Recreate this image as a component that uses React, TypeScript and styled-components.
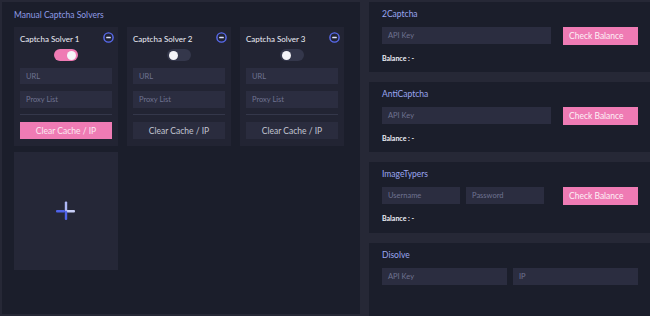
import { createGlobalStyle, styled } from 'styled-components';

const GlobalStyle = createGlobalStyle`
  html, body {
    margin: 0;
    padding: 0;
    background: #262836;
    font-family: Lato, "Open Sans", sans-serif;
    overflow: hidden;
  }
`;

type Solver = { name: string; on: boolean };

const solvers: Solver[] = [
  { name: 'Captcha Solver 1', on: true },
  { name: 'Captcha Solver 2', on: false },
  { name: 'Captcha Solver 3', on: false },
];

const MinusIcon = () => (
  <svg width="11" height="11" viewBox="0 0 11 11">
    <circle cx="5.5" cy="5.5" r="4.6" fill="none" stroke="#5a6cf2" strokeWidth="1.4" />
    <rect x="3.2" y="4.8" width="4.6" height="1.4" rx="0.5" fill="#dfe3ff" />
  </svg>
);

const PlusIcon = () => (
  <svg width="20" height="20" viewBox="0 0 20 20">
    <rect x="0" y="9" width="9" height="2.4" rx="1" fill="#4f63ea" />
    <rect x="9" y="9" width="10" height="2.4" rx="1" fill="#c9cff8" />
    <rect x="8.8" y="0.5" width="2.4" height="9.5" rx="1" fill="#aeb7f6" />
    <rect x="8.8" y="10" width="2.4" height="9" rx="1" fill="#4f63ea" />
  </svg>
);

export default function App() {
  return (
    <>
      <GlobalStyle />
      <Page>
        <LeftPanel>
          <PanelTitle>Manual Captcha Solvers</PanelTitle>
          <CardGrid>
            {solvers.map((s) => (
              <SolverCard key={s.name}>
                <CardHeader>
                  <CardName>{s.name}</CardName>
                  <MinusIcon />
                </CardHeader>
                <ToggleRow>
                  <Toggle $on={s.on}>
                    <Knob $on={s.on} />
                  </Toggle>
                </ToggleRow>
                <Field $h={16}>URL</Field>
                <Field $h={17}>Proxy List</Field>
                <Divider />
                <ClearButton $primary={s.on}>Clear Cache / IP</ClearButton>
              </SolverCard>
            ))}
            <AddCard>
              <PlusIcon />
            </AddCard>
          </CardGrid>
        </LeftPanel>
        <RightColumn>
          <Section $h={70}>
            <SectionTitle>2Captcha</SectionTitle>
            <Row>
              <Field $h={17} $w={169}>API Key</Field>
              <BalanceButton>Check Balance</BalanceButton>
            </Row>
            <Balance>Balance : -</Balance>
          </Section>
          <Section $h={70}>
            <SectionTitle>AntiCaptcha</SectionTitle>
            <Row>
              <Field $h={17} $w={169}>API Key</Field>
              <BalanceButton>Check Balance</BalanceButton>
            </Row>
            <Balance>Balance : -</Balance>
          </Section>
          <Section $h={71}>
            <SectionTitle>ImageTypers</SectionTitle>
            <Row>
              <FieldGroup>
                <Field $h={17} $w={78}>Username</Field>
                <Field $h={17} $w={78}>Password</Field>
              </FieldGroup>
              <BalanceButton>Check Balance</BalanceButton>
            </Row>
            <Balance>Balance : -</Balance>
          </Section>
          <Section $h={80}>
            <SectionTitle>Disolve</SectionTitle>
            <Row>
              <Field $h={17} $w={125}>API Key</Field>
              <Field $h={17} $w={125}>IP</Field>
            </Row>
          </Section>
        </RightColumn>
      </Page>
    </>
  );
}

const Page = styled.div`
  display: flex;
  gap: 9px;
  height: 316px;
  width: 650px;
  padding: 2px 0 0 2px;
  box-sizing: border-box;
`;

const LeftPanel = styled.div`
  width: 358px;
  height: 312px;
  background: #1b1e2b;
  box-sizing: border-box;
  padding: 7px 0 0 12px;
`;

const PanelTitle = styled.div`
  color: #8f9ce6;
  font-size: 8.5px;
  height: 12px;
  line-height: 12px;
`;

const CardGrid = styled.div`
  display: grid;
  grid-template-columns: repeat(3, 104px);
  column-gap: 9px;
  row-gap: 6px;
  margin-top: 6px;
`;

const SolverCard = styled.div`
  background: #222433;
  height: 119px;
  box-sizing: border-box;
  padding: 5px 6px 0 6px;
  display: flex;
  flex-direction: column;
`;

const CardHeader = styled.div`
  display: flex;
  justify-content: space-between;
  align-items: center;
  height: 11px;
  margin-right: -2px;
`;

const CardName = styled.span`
  color: #eef0f8;
  font-size: 8px;
  margin-top: 3px;
`;

const ToggleRow = styled.div`
  display: flex;
  justify-content: center;
  margin-top: 6px;
  height: 12px;
`;

const Toggle = styled.div<{ $on: boolean }>`
  width: 24px;
  height: 12px;
  border-radius: 6px;
  background: ${(p) => (p.$on ? '#ef7bb4' : '#34374b')};
  display: flex;
  align-items: center;
  justify-content: ${(p) => (p.$on ? 'flex-end' : 'flex-start')};
  padding: 0 2px;
  box-sizing: border-box;
`;

const Knob = styled.div<{ $on: boolean }>`
  width: 9px;
  height: 9px;
  border-radius: 50%;
  background: #f4f4f8;
`;

const Field = styled.div<{ $h: number; $w?: number }>`
  height: ${(p) => p.$h}px;
  width: ${(p) => (p.$w ? `${p.$w}px` : 'auto')};
  flex-shrink: 0;
  background: #2b2d40;
  color: #6f7390;
  font-size: 7.5px;
  display: flex;
  align-items: center;
  padding-left: 6px;
  box-sizing: border-box;
  margin-top: 7px;
  ${SolverCard} &:first-of-type {
    margin-top: 8px;
  }
`;

const Divider = styled.div`
  height: 1px;
  background: #34374a;
  margin-top: 6px;
`;

const ClearButton = styled.div<{ $primary: boolean }>`
  height: 17px;
  margin-top: 7px;
  background: ${(p) => (p.$primary ? '#ef7bb4' : '#2a2c3e')};
  color: ${(p) => (p.$primary ? '#fbe9f2' : '#c2c4d2')};
  font-size: 8.5px;
  display: flex;
  align-items: center;
  justify-content: center;
`;

const AddCard = styled.div`
  background: #252737;
  height: 118px;
  display: flex;
  align-items: center;
  justify-content: center;
`;

const RightColumn = styled.div`
  flex: 1;
  display: flex;
  flex-direction: column;
  gap: 10px;
`;

const Section = styled.div<{ $h: number }>`
  height: ${(p) => p.$h}px;
  flex-shrink: 0;
  background: #1b1e2b;
  padding: 6px 0 0 13px;
  box-sizing: border-box;
`;

const SectionTitle = styled.div`
  color: #9aa6f0;
  font-size: 8.5px;
  height: 12px;
  line-height: 12px;
`;

const Row = styled.div`
  display: flex;
  gap: 6px;
  margin-top: 7px;
  align-items: flex-start;
  & > ${Field} {
    margin-top: 0;
  }
`;

const FieldGroup = styled.div`
  display: flex;
  gap: 6px;
  width: 169px;
  & > ${Field} {
    margin-top: 0;
  }
`;

const BalanceButton = styled.div`
  width: 75px;
  height: 18px;
  margin-left: 6px;
  background: #ef7bb4;
  color: #fdf0f6;
  font-size: 8.5px;
  display: flex;
  align-items: center;
  padding-left: 6px;
  box-sizing: border-box;
`;

const Balance = styled.div`
  color: #eef0f8;
  font-size: 7px;
  font-weight: 700;
  margin-top: 9px;
`;
